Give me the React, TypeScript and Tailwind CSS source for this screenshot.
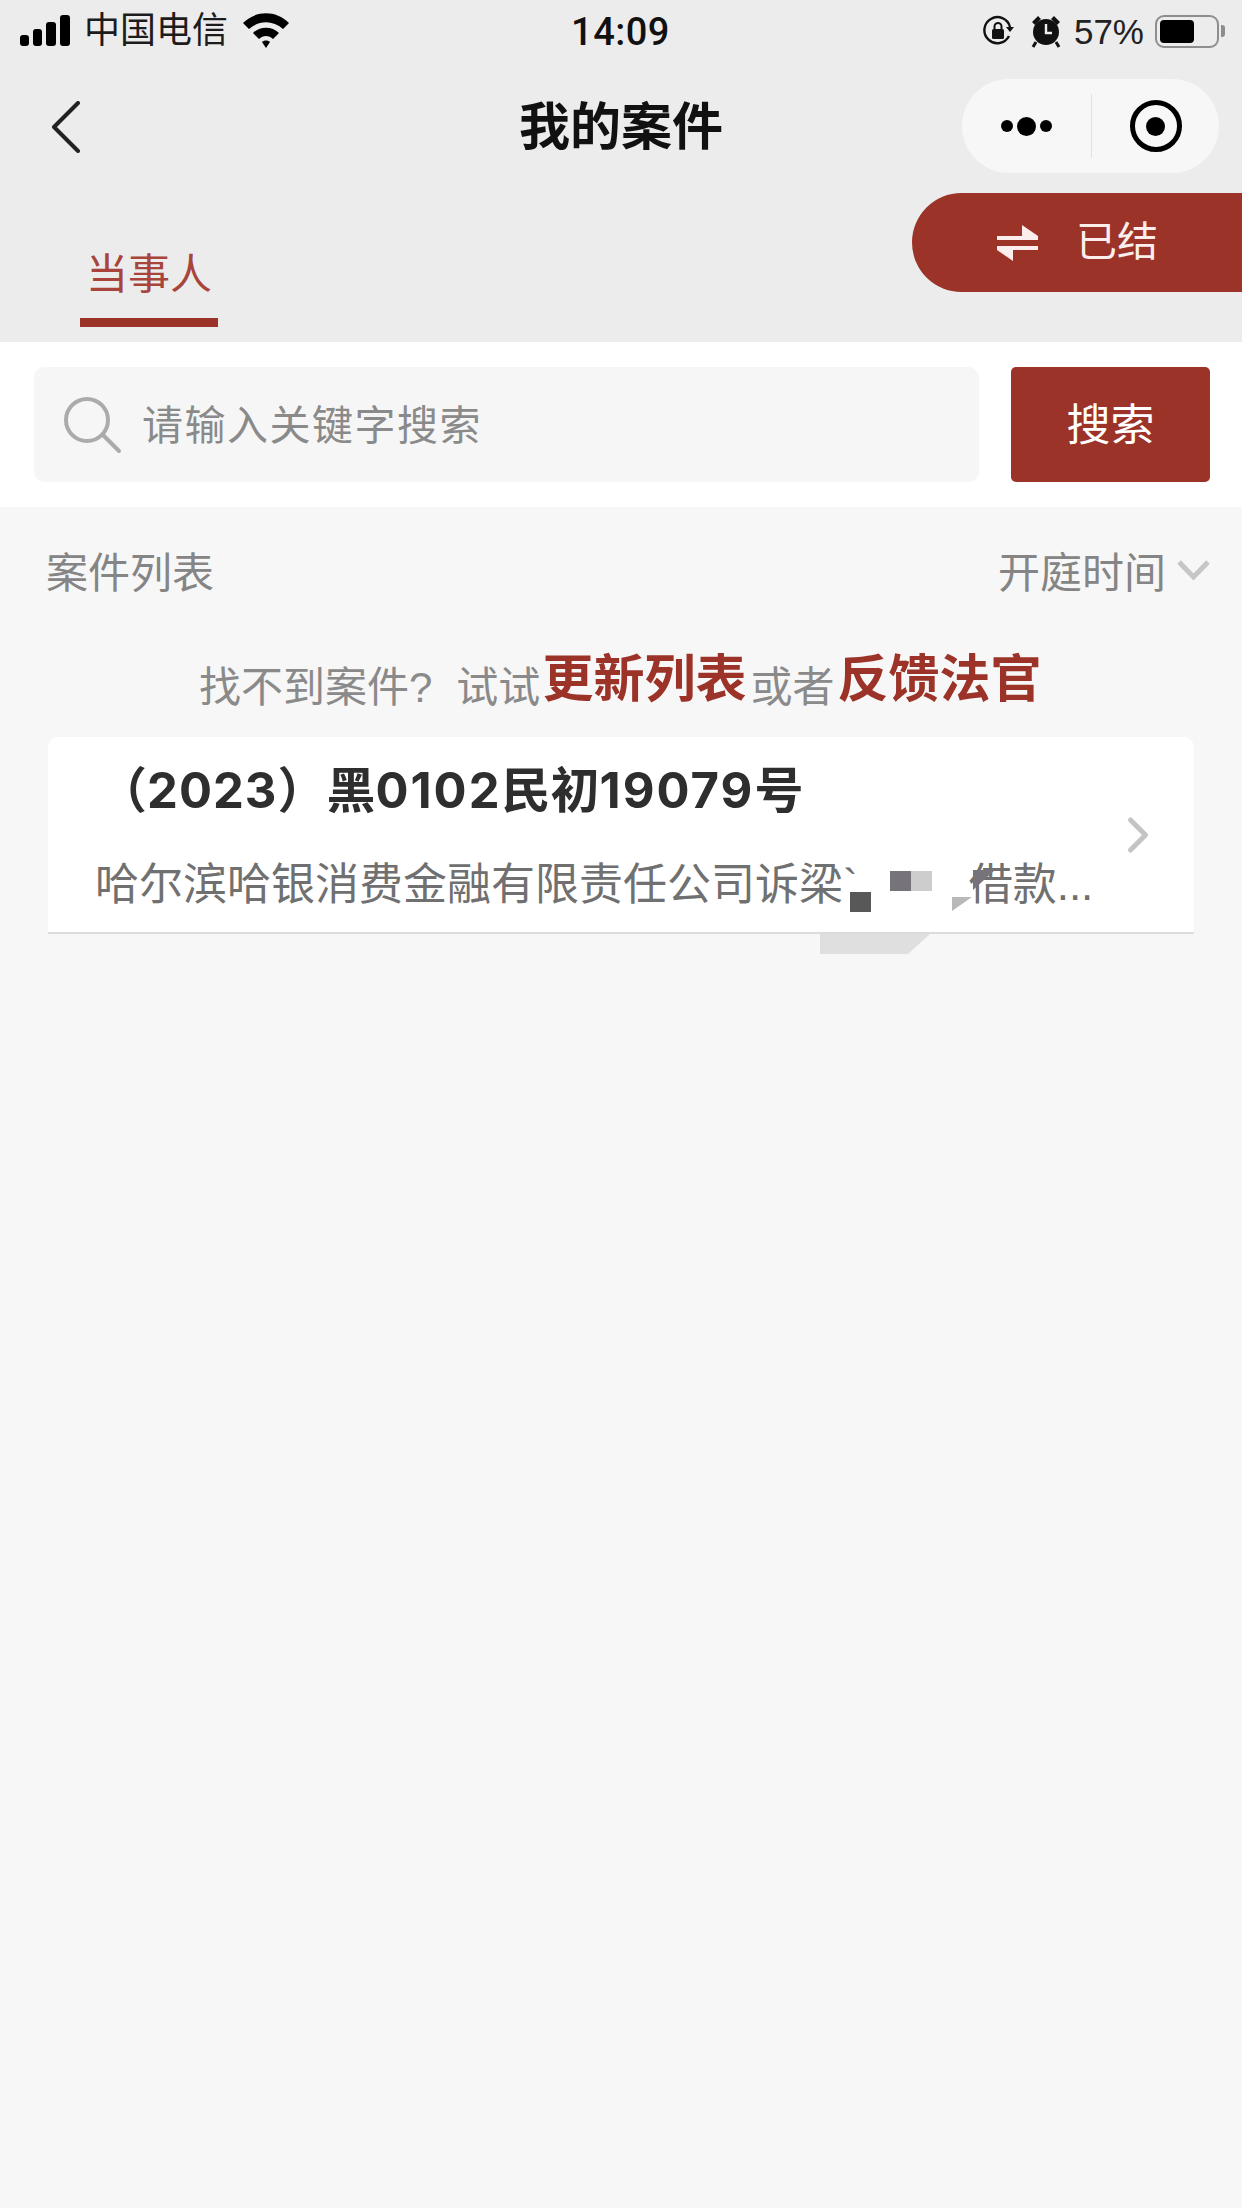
import { ChevronRight } from 'lucide-react';

const font = { fontFamily: '"Liberation Sans", "Noto Sans CJK SC", sans-serif' };

function StatusBar() {
  return (
    <div className="h-[62px] flex items-center justify-between pl-[20px] pr-[17px] text-black">
      <div className="w-[400px] flex items-center">
        <div className="flex items-end gap-[4px] h-[30px]">
          <span className="w-[9px] h-[11px] rounded-[3px] bg-black" />
          <span className="w-[9px] h-[17px] rounded-[3px] bg-black" />
          <span className="w-[10px] h-[24px] rounded-[3px] bg-black" />
          <span className="w-[10px] h-[31px] rounded-[3px] bg-black" />
        </div>
        <span className="ml-[14px] text-[36px] leading-none text-[#1c1c1c]">中国电信</span>
        <svg className="ml-[14px] -mt-[2px]" width="48" height="38" viewBox="0 0 48 38">
          <path d="M1 12C14-1 34-1 47 12L41 18C31 9 17 9 7 18Z" fill="#000" />
          <path d="M11 22C18 15 30 15 37 22L31 28C27 24 21 24 17 28Z" fill="#000" />
          <path d="M20 31C22 29 26 29 28 31L24 37Z" fill="#000" />
        </svg>
      </div>
      <span className="text-[38px] leading-none font-medium tracking-[0.5px] text-[#111] -ml-[4px] mt-[1px]" style={{ fontFamily: 'Roboto, sans-serif' }}>14:09</span>
      <div className="w-[400px] flex items-center justify-end">
        <svg width="32" height="32" viewBox="0 0 32 32" fill="none">
          <path d="M27 21A13 13 0 1 1 28 12" stroke="#111" strokeWidth="2.4" />
          <path d="M24 12L32 12L28 17Z" fill="#111" />
          <rect x="10" y="14" width="12" height="10" rx="1.5" fill="#111" />
          <path d="M12.5 14V11.5A3.5 3.5 0 0 1 19.5 11.5V14" stroke="#111" strokeWidth="2" />
        </svg>
        <svg className="ml-[16px]" width="32" height="34" viewBox="0 0 32 34">
          <circle cx="16" cy="18" r="13" fill="#111" />
          <path d="M16 10V19H22" stroke="#eee" strokeWidth="2.4" fill="none" />
          <path d="M2 8L8 2L11 5L5 11ZM30 8L24 2L21 5L27 11Z" fill="#111" />
          <path d="M6 28L3 33M26 28L29 33" stroke="#111" strokeWidth="3" />
        </svg>
        <span className="ml-[12px] text-[35px] leading-none text-[#222]">57%</span>
        <div className="ml-[11px] w-[64px] h-[33px] rounded-[9px] border-[2px] border-[#8e8e8e] p-[3px] flex">
          <div className="w-[34px] rounded-[4px] bg-black" />
        </div>
        <span className="ml-[2px] w-[4px] h-[12px] rounded-r-[3px] bg-[#8e8e8e]" />
      </div>
    </div>
  );
}

function NavBar() {
  return (
    <div className="relative h-[130px] flex items-center justify-center -mb-[6px]">
      <svg className="absolute left-[50px] top-[39px]" width="32" height="52" viewBox="0 0 32 52" fill="none">
        <path d="M28 2L4 26L28 50" stroke="#222" strokeWidth="4" strokeLinecap="round" strokeLinejoin="round" />
      </svg>
      <h1 className="text-[51px] font-bold leading-none text-[#111]">我的案件</h1>
      <div className="absolute left-[962px] top-[17px] w-[257px] h-[94px] rounded-full bg-[#f7f7f7] flex items-center">
        <div className="w-[129px] flex items-center justify-center gap-[4px]">
          <span className="size-[12px] rounded-full bg-black" />
          <span className="size-[19px] rounded-full bg-black" />
          <span className="size-[12px] rounded-full bg-black" />
        </div>
        <span className="w-px h-[64px] bg-[#e2e2e2]" />
        <div className="flex-1 flex items-center justify-center">
          <div className="size-[52px] rounded-full border-[5px] border-black flex items-center justify-center">
            <span className="size-[19px] rounded-full bg-black" />
          </div>
        </div>
      </div>
    </div>
  );
}

function Tabs() {
  return (
    <div className="relative h-[156px]">
      <div className="absolute left-[912px] top-[7px] w-[330px] h-[99px] rounded-l-[50px] bg-[#9c3328] flex items-center text-[#fbeeec]">
        <svg className="ml-[85px]" width="42" height="40" viewBox="0 0 42 40" fill="#fbeeec">
          <path d="M0 13H41V17H0ZM25 2L41 13H25ZM0 23H41V27H0ZM16 38L0 27H16Z" />
        </svg>
        <span className="ml-[37px] text-[41px] leading-none">已结</span>
      </div>
      <div className="absolute left-[80px] top-[65px] w-[138px] h-[91px]">
        <div className="text-center text-[42px] leading-none pt-[3px] text-[#a8443a]">当事人</div>
        <div className="mt-[22px] h-[9px] bg-[#9c3328]" />
      </div>
    </div>
  );
}

function SearchBar() {
  return (
    <div className="h-[165px] bg-white flex items-center pl-[34px] pr-[32px]">
      <div className="w-[945px] h-[115px] rounded-[10px] bg-[#f6f6f6] flex items-center pl-[29px]">
        <svg width="60" height="58" viewBox="0 0 60 58" fill="none">
          <circle cx="24" cy="24" r="21" stroke="#ababab" strokeWidth="4" />
          <path d="M40 39L56 55" stroke="#ababab" strokeWidth="4" strokeLinecap="round" />
        </svg>
        <span className="ml-[19px] mt-[3px] text-[41px] leading-none text-[#8a8a8a] tracking-[1.5px]">请输入关键字搜索</span>
      </div>
      <button className="ml-[32px] w-[199px] h-[115px] pt-[3px] rounded-[5px] bg-[#9c3328] text-white text-[44px] leading-none">搜索</button>
    </div>
  );
}

function ListHeader() {
  return (
    <div className="h-[128px] flex items-center justify-between pl-[46px] pr-[31px] pt-[6px]">
      <span className="text-[42px] leading-none text-[#858585]">案件列表</span>
      <div className="flex items-center">
        <span className="text-[42px] leading-none text-[#858585]">开庭时间</span>
        <svg className="ml-[10px] -mt-[8px]" width="35" height="22" viewBox="0 0 35 22" fill="none">
          <path d="M3 3L17.5 18L32 3" stroke="#c6c6c6" strokeWidth="5" />
        </svg>
      </div>
    </div>
  );
}

function Hint() {
  return (
    <div className="h-[102px] pl-[199px] pt-[15px] flex items-baseline whitespace-nowrap text-[42px] leading-[60px] text-[#8a8a8a]">
      <span className="translate-y-[5px]">找不到案件?</span>
      <span className="ml-[24px] translate-y-[5px]">试试</span>
      <span className="ml-[2px] text-[51px] font-bold text-[#9c3328]">更新列表</span>
      <span className="ml-[4px] translate-y-[5px]">或者</span>
      <span className="ml-[3px] text-[51px] font-bold text-[#9c3328]">反馈法官</span>
    </div>
  );
}

function CaseCard() {
  return (
    <div className="relative mx-[48px] h-[197px] rounded-t-[10px] bg-white border-b-[2px] border-[#dcdcdc]">
      <div className="pl-[50px] pt-[29px] text-[49px] font-bold leading-none text-[#2e2e2e] whitespace-nowrap">
        （<span className="tracking-[1px]" style={{ fontFamily: 'Inter, sans-serif' }}>2023</span>）黑
        <span className="tracking-[2px]" style={{ fontFamily: 'Inter, sans-serif' }}>0102</span>民初
        <span className="tracking-[2px]" style={{ fontFamily: 'Inter, sans-serif' }}>19079</span>号
      </div>
      <div className="pl-[47px] pt-[47px] text-[44px] leading-none text-[#707070] whitespace-nowrap">
        哈尔滨哈银消费金融有限责任公司诉梁`
        <span className="inline-block w-[111px]" />
        借款...
      </div>
      <ChevronRight className="absolute left-[1060px] top-[68px]" size={60} strokeWidth={2} color="#c4c4c4" />
      {/* mosaic over the redacted name */}
      <span className="absolute left-[802px] top-[155px] w-[21px] h-[20px] bg-[#585858]" />
      <span className="absolute left-[842px] top-[134px] w-[21px] h-[20px] bg-[#77737a]" />
      <span className="absolute left-[863px] top-[134px] w-[21px] h-[20px] bg-[#cdcdcd]" />
      <svg className="absolute left-[904px] top-[154px]" width="20" height="20" viewBox="0 0 20 20">
        <path d="M0 20V6H20Z" fill="#b9b9b9" />
      </svg>
      <svg className="absolute left-[925px] top-[133px]" width="22" height="20" viewBox="0 0 22 20">
        <path d="M0 0H22L0 20Z" fill="#77737a" />
      </svg>
      <svg className="absolute left-[772px] top-[197px]" width="110" height="22" viewBox="0 0 110 22">
        <path d="M0 0H110L88 20H0Z" fill="#dfdfdf" />
      </svg>
    </div>
  );
}

export default function App() {
  return (
    <div className="w-[1242px] h-[2208px] overflow-hidden bg-[#f7f7f7]" style={font}>
      <div className="bg-[#ececec] h-[342px]">
        <StatusBar />
        <NavBar />
        <Tabs />
      </div>
      <SearchBar />
      <ListHeader />
      <Hint />
      <CaseCard />
    </div>
  );
}
